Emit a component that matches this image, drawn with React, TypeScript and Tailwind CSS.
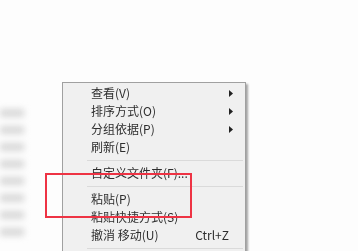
import { ReactNode } from 'react';

type Item = { label: string; sub?: boolean; key?: string };

const groups: Item[][] = [
  [
    { label: '查看(V)', sub: true },
    { label: '排序方式(O)', sub: true },
    { label: '分组依据(P)', sub: true },
    { label: '刷新(E)' },
  ],
  [{ label: '自定义文件夹(F)...' }],
  [
    { label: '粘贴(P)' },
    { label: '粘贴快捷方式(S)' },
    { label: '撤消 移动(U)', key: 'Ctrl+Z' },
  ],
];

function Row({ item }: { item: Item }) {
  return (
    <div className="h-[18px] flex items-center pl-[28px] pr-[10px] text-[12px] text-[#2e2e2e] blur-[0.3px]">
      <span className="flex-1">{item.label}</span>
      {item.key && <span className="mr-[6px]">{item.key}</span>}
      {item.sub && (
        <svg width="4" height="7" viewBox="0 0 4 7" className="mr-[2px]">
          <path d="M0 0 L4 3.5 L0 7 Z" fill="#222" />
        </svg>
      )}
    </div>
  );
}

function Separator() {
  return (
    <div className="h-[8px] flex items-center pl-[24px] pr-[2px]">
      <div className="h-px w-full bg-[#dadada]" />
    </div>
  );
}

export default function App() {
  const rows: ReactNode[] = [];
  groups.forEach((g, i) => {
    if (i > 0) rows.push(<Separator key={'s' + i} />);
    g.forEach((it) => rows.push(<Row key={it.label} item={it} />));
  });
  rows.push(<Separator key="end" />);

  return (
    <div
      className="relative w-[358px] h-[251px] bg-[#fdfdfd] overflow-hidden"
      style={{ fontFamily: '"Noto Sans CJK SC", "Liberation Sans", sans-serif' }}
    >
      {/* blurred desktop items on the left */}
      <div className="absolute left-0 top-[109px] flex flex-col gap-[9px] blur-[3px]">
        {[0, 1, 2, 3, 4, 5, 6, 7].map((i) => (
          <div key={i} className="w-[24px] h-[8px] bg-[#d8d8d8]" />
        ))}
      </div>

      {/* context menu */}
      <div className="absolute left-[62px] top-[82px] w-[184px] bg-[#f0f0f0] border border-[#a0a0a0] pt-[1px] shadow-[2px_2px_2px_rgba(0,0,0,0.35)]">
        {rows}
      </div>

      {/* red annotation box */}
      <div className="absolute left-[45px] top-[173px] w-[147px] h-[45px] border-2 border-[#ee3344]" />
    </div>
  );
}
